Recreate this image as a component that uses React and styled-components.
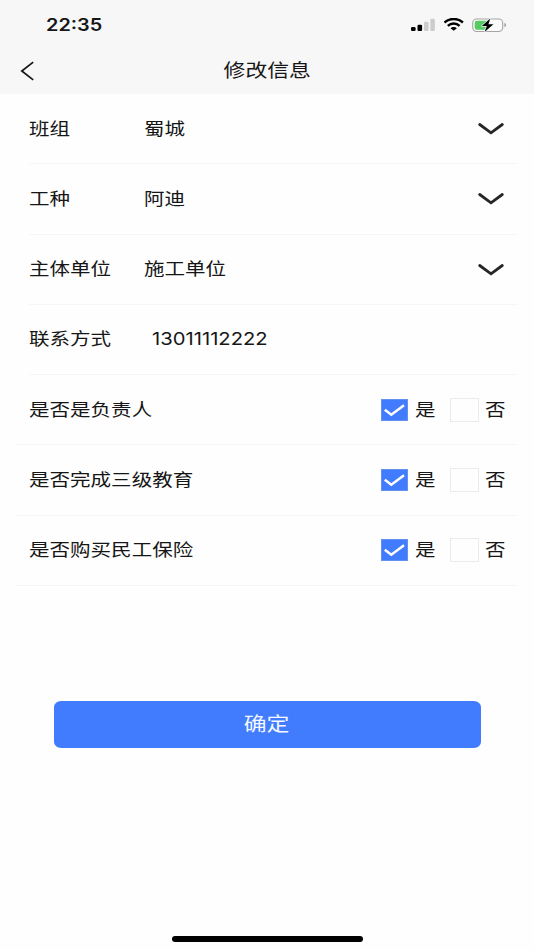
import React from "react";
import styled, { createGlobalStyle } from "styled-components";

const GlobalStyle = createGlobalStyle`
  * { box-sizing: border-box; }
  body {
    margin: 0;
    background: #fefefe;
    color: #161616;
    font-family: Inter, "Noto Sans CJK SC", sans-serif;
  }
`;

const Screen = styled.div`
  width: 534px;
  height: 950px;
  display: flex;
  flex-direction: column;
  overflow: hidden;
`;

const Header = styled.header`
  height: 94px;
  flex: none;
  background: #f7f7f7;
`;

const StatusBar = styled.div`
  height: 48px;
  padding: 1px 27px 0 45.5px;
  display: flex;
  align-items: center;
  justify-content: space-between;
`;

const StatusIcons = styled.div`
  display: flex;
  align-items: center;
  svg { display: block; }
  svg + svg { margin-left: 8px; }
`;

const NavBar = styled.div`
  height: 44px;
  padding: 0 20px;
  display: grid;
  grid-template-columns: 60px 1fr 60px;
  align-items: center;
`;

const Text = styled.span`
  display: inline-block;
  vertical-align: top;
  white-space: nowrap;
  font-size: ${(p) => p.$size || 17.5}px;
  line-height: 26px;
  font-weight: ${(p) => p.$weight || 400};
  transform: scaleX(${(p) => p.$stretch || 1.173});
  transform-origin: ${(p) => p.$origin || "left"} center;
`;

const Title = styled.h1`
  margin: 0;
  display: flex;
  justify-content: center;
`;

const BackButton = styled.button`
  width: 16px;
  height: 22px;
  padding: 2px 0 0;
  border: 0;
  background: none;
  svg { display: block; }
`;

const Form = styled.main`
  display: flex;
  flex-direction: column;
`;

const Row = styled.div`
  height: 70.28px;
  margin-left: ${(p) => (p.$wide ? 16 : 29)}px;
  margin-right: 16px;
  padding-left: ${(p) => (p.$wide ? 13 : 0)}px;
  padding-right: 14px;
  border-bottom: 1px solid #f6f6f6;
  display: flex;
  align-items: center;
`;

const Label = styled.div`
  width: ${(p) => (p.$indent ? 123 : 114.6)}px;
  flex: none;
`;

const Value = styled.div`
  flex: 1;
`;

const Options = styled.div`
  margin-left: auto;
  display: flex;
  align-items: center;
`;

const Option = styled.div`
  display: flex;
  align-items: center;
  width: ${(p) => (p.$last ? 54 : 69)}px;
`;

const Box = styled.span`
  width: ${(p) => (p.$checked ? 27 : 29)}px;
  height: ${(p) => (p.$checked ? 22 : 24)}px;
  margin-right: ${(p) => (p.$checked ? 7 : 6)}px;
  border: 1px solid ${(p) => (p.$checked ? "#6690ef" : "#ebebeb")};
  background: ${(p) => (p.$checked ? "#417cff" : "#fefefe")};
  display: flex;
  align-items: center;
  justify-content: center;
`;

const Submit = styled.button`
  width: 427px;
  height: 47px;
  margin: 115px auto 0 53.5px;
  padding: 0;
  border: 0;
  border-radius: 7px / 6px;
  background: #417cff;
  color: #f4f7ff;
  font-family: inherit;
`;

const HomeIndicator = styled.div`
  width: 191px;
  height: 6px;
  margin: auto auto 8px 171.5px;
  border-radius: 3px;
  background: #000;
`;

const Signal = () => (
  <svg width="25" height="14" viewBox="0 0 25 14">
    <rect x="0" y="9" width="4.6" height="4" rx="1.2" fill="#000" />
    <rect x="6.5" y="6.7" width="4.6" height="6.3" rx="1.2" fill="#000" />
    <rect x="13" y="3.7" width="4.6" height="9.3" rx="1.2" fill="#cdcdcd" />
    <rect x="19.3" y="0.7" width="4.6" height="12.3" rx="1.2" fill="#cdcdcd" />
  </svg>
);

const Wifi = () => (
  <svg width="20" height="13" viewBox="0 0 20 13" fill="none" stroke="#000" strokeWidth="2.4">
    <path d="M0.5 4.5C5.7-0.2 13.7-0.2 18.9 4.5" />
    <path d="M3.8 7.8C7.2 4.8 12.2 4.8 15.6 7.8" />
    <path d="M9.7 12.7L6.5 10.3C8.2 8.7 11.2 8.7 12.9 10.3Z" fill="#000" stroke="none" />
  </svg>
);

const Battery = () => (
  <svg width="35" height="16" viewBox="0 0 35 16">
    <rect x="0.7" y="2" width="30" height="12.5" rx="4" fill="#fafafa" stroke="#a5a5a5" strokeWidth="1.1" />
    <path d="M5 3.8H15V12.7H5Q2.7 12.7 2.7 10.5V6Q2.7 3.8 5 3.8Z" fill="#55cb62" />
    <path d="M32.3 5.8Q34.2 6.5 34.2 8T32.3 10.2Z" fill="#a5a5a5" />
    <path d="M18.3 1.4L9.8 9H14.8L12.6 15L21.4 7.2H16.4Z" fill="#000" stroke="#f0f7f0" strokeWidth="1.4" paintOrder="stroke" strokeLinejoin="round" />
  </svg>
);

const Back = () => (
  <svg width="16" height="20" viewBox="0 0 16 20" fill="none" stroke="#161616" strokeWidth="1.7">
    <path d="M13.2 1.2L1.8 10L13.2 18.8" />
  </svg>
);

const Chevron = () => (
  <svg width="26" height="13" viewBox="0 0 26 13" fill="none" stroke="#262626" strokeWidth="2.8" strokeLinecap="round">
    <path d="M1.7 2.5L13 10.8L24.3 2.5" />
  </svg>
);

const Check = () => (
  <svg width="21" height="14" viewBox="0 0 21 14" fill="none" stroke="#fff" strokeWidth="2.5">
    <path d="M0.8 6.8L7.3 11.7L20 2.3" />
  </svg>
);

const fields = [
  { label: "班组", value: "蜀城", select: true },
  { label: "工种", value: "阿迪", select: true },
  { label: "主体单位", value: "施工单位", select: true },
  { label: "联系方式", value: "13011112222" },
];

const questions = ["是否是负责人", "是否完成三级教育", "是否购买民工保险"];

export default function App() {
  return (
    <Screen>
      <GlobalStyle />
      <Header>
        <StatusBar>
          <Text $size={17.3} $weight={600} $stretch={1.15}>22:35</Text>
          <StatusIcons>
            <Signal />
            <Wifi />
            <Battery />
          </StatusIcons>
        </StatusBar>
        <NavBar>
          <BackButton aria-label="返回"><Back /></BackButton>
          <Title><Text $size={18.6} $origin="center">修改信息</Text></Title>
        </NavBar>
      </Header>
      <Form>
        {fields.map((f) => (
          <Row key={f.label}>
            <Label $indent={!f.select}><Text>{f.label}</Text></Label>
            <Value>
              <Text $size={f.select ? 17.5 : 17.3} $stretch={f.select ? 1.173 : 1.17}>{f.value}</Text>
            </Value>
            {f.select && <Chevron />}
          </Row>
        ))}
        {questions.map((q) => (
          <Row key={q} $wide>
            <Text>{q}</Text>
            <Options>
              <Option>
                <Box $checked><Check /></Box>
                <Text>是</Text>
              </Option>
              <Option $last>
                <Box />
                <Text>否</Text>
              </Option>
            </Options>
          </Row>
        ))}
      </Form>
      <Submit><Text $size={19.5} $origin="center">确定</Text></Submit>
      <HomeIndicator />
    </Screen>
  );
}
